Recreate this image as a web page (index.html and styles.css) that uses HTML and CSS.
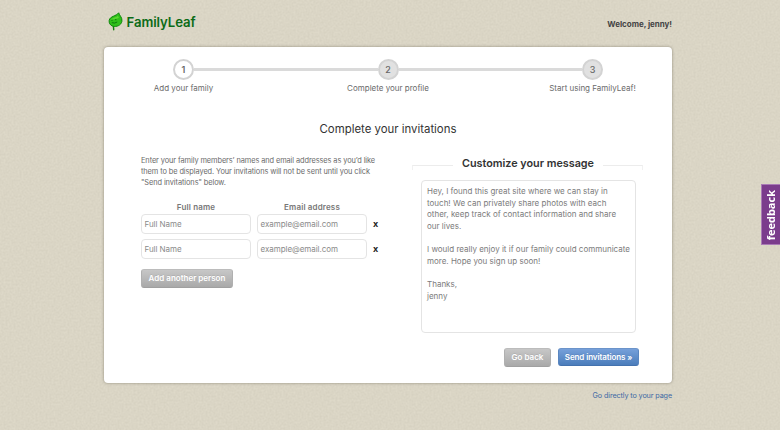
FILE: index.html
```
<!DOCTYPE html>
<html lang="en">
<head>
<meta charset="utf-8">
<title>FamilyLeaf</title>
<link rel="stylesheet" href="styles.css">
</head>
<body>
<svg class="paper" width="780" height="430" aria-hidden="true">
  <filter id="grain" x="0" y="0" width="100%" height="100%" color-interpolation-filters="sRGB">
    <feTurbulence type="fractalNoise" baseFrequency="0.5" numOctaves="2" seed="4"/>
    <feColorMatrix values="0.055 0 0 0 0.828  0.055 0 0 0 0.808  0.055 0 0 0 0.744  0 0 0 0 1"/>
  </filter>
  <rect width="780" height="430" filter="url(#grain)"/>
</svg>
<div class="page">
  <header class="header">
    <div class="logo">
      <svg class="leaf" viewBox="0 0 16 19">
        <path d="M5.4 13.5L5.7 17.8" stroke="#12810c" stroke-width="1.4" stroke-linecap="round"/>
        <path d="M10.7 .8C11.3 3.6 14.6 5.4 13.9 9.3C13.2 13.3 8.6 15.2 4.8 14.2C2.2 13.4 .8 11 1.2 8.3C1.9 4.2 8.3 4.2 10.7 .8Z" fill="#2fc01a" stroke="#0b8609" stroke-width="1"/>
        <path d="M9.8 3.7C8.2 5.6 3.5 5.6 2.5 8.3C4.8 6.8 9.5 7.4 11 5.5Z" fill="#5ad82f"/>
        <path d="M3.4 8.3h1.2M7 7.7h1.4M3.8 10.7Q6.6 11.8 9.2 10" fill="none" stroke="#08700a" stroke-width=".9"/>
      </svg>
      <span class="brand">FamilyLeaf</span>
    </div>
    <div class="welcome">Welcome, jenny!</div>
  </header>
  <main class="card">
    <ol class="steps">
      <li class="step active"><span class="dot">1</span><span class="label">Add your family</span></li>
      <li class="bar"></li>
      <li class="step"><span class="dot">2</span><span class="label">Complete your profile</span></li>
      <li class="bar"></li>
      <li class="step"><span class="dot">3</span><span class="label">Start using FamilyLeaf!</span></li>
    </ol>
    <h1 class="title">Complete your invitations</h1>
    <div class="columns">
      <section class="people">
        <p class="intro">Enter your family members’ names and email addresses as you’d like<br>them to be displayed. Your invitations will not be sent until you click<br>"Send invitations" below.</p>
        <div class="grid">
          <div class="th">Full name</div><div class="th">Email address</div><div></div>
          <div class="field">Full Name</div><div class="field">example@email.com</div><div class="remove">x</div>
          <div class="field">Full Name</div><div class="field">example@email.com</div><div class="remove">x</div>
        </div>
        <button class="btn gray add">Add another person</button>
      </section>
      <section class="message">
        <h2 class="legend"><span class="rule left"></span><span class="legend-text">Customize your message</span><span class="rule right"></span></h2>
        <div class="text">Hey, I found this great site where we can stay in<br>touch! We can privately share photos with each<br>other, keep track of contact information and share<br>our lives.<br><br>I would really enjoy it if our family could communicate<br>more. Hope you sign up soon!<br><br>Thanks,<br>jenny</div>
        <div class="actions">
          <button class="btn gray back">Go back</button>
          <button class="btn blue send">Send invitations »</button>
        </div>
      </section>
    </div>
  </main>
  <a class="skip">Go directly to your page</a>
</div>
<div class="feedback"><span>feedback</span></div>
</body>
</html>
```
FILE: styles.css
```
* { box-sizing: border-box; }
body {
  margin: 0;
  width: 780px;
  height: 430px;
  overflow: hidden;
  background: #d9d5c4;
  font-family: Inter, "Liberation Sans", sans-serif;
  font-size: 8px;
  color: #6a6a6a;
}
.paper { position: absolute; left: 0; top: 0; }
.page { position: relative; width: 568px; margin-left: 104px; }
.header { height: 47px; display: flex; justify-content: space-between; }
.logo { display: flex; padding: 12px 0 0 4px; }
.leaf { width: 16px; height: 19px; fill: none; }
.brand { margin-left: 2.5px; font: 600 13.2px/20px Inter, sans-serif; color: #0b6b17; letter-spacing: -.07px; white-space: nowrap; }
.welcome { padding-top: 19px; font-weight: 700; line-height: 11px; color: #444; letter-spacing: -.03px; }
.card {
  height: 336px;
  background: #fff;
  border-radius: 4px;
  box-shadow: 0 0 3px rgba(80, 75, 60, .55);
}
.steps {
  list-style: none;
  margin: 0;
  padding: 12px 69px 0 69px;
  height: 69px;
  display: flex;
}
.step { width: 21px; display: flex; flex-direction: column; align-items: center; flex: none; }
.dot {
  width: 21px;
  height: 21px;
  border: 2px solid #d3d3d3;
  border-radius: 50%;
  background: #e1e1e1;
  font-size: 9px;
  font-weight: 500;
  line-height: 17px;
  text-align: center;
  color: #666;
}
.active .dot { background: #fff; font-weight: 600; }
.label { margin-top: 2px; line-height: 13px; white-space: nowrap; }
.bar { flex: 1; height: 3px; margin-top: 9px; background: #dadada; }
.title { margin: 0; height: 38px; padding-top: 5px; text-align: center; font-size: 11.4px; line-height: 16px; font-weight: 400; color: #333; }
.columns { display: flex; padding-left: 37px; }
.people { width: 271px; padding-top: 1px; }
.intro { margin: 0; height: 45px; font-size: 7.4px; letter-spacing: -.09px; line-height: 11px; white-space: nowrap; }
.grid {
  display: grid;
  grid-template-columns: 110px 110px 12px;
  grid-template-rows: 9px 20px 20px;
  column-gap: 6px;
  row-gap: 5px;
  height: 69px;
}
.th { text-align: center; font-weight: 600; line-height: 14px; color: #777; letter-spacing: .15px; }
.field { border: 1px solid #e4e4e4; border-radius: 4px; padding-left: 2.5px; line-height: 19px; color: #8a8a8a; letter-spacing: -.05px; }
.remove { font-size: 9px; font-weight: 700; line-height: 19px; color: #222; }
.btn {
  border: 1px solid;
  border-radius: 3px;
  padding: 0;
  font: 600 8px/17px Inter, sans-serif;
  color: #fff;
  white-space: nowrap;
  text-shadow: 0 -1px 0 rgba(0, 0, 0, .08);
}
.gray { height: 19px; background: linear-gradient(#c7c7c7, #a9a9a9); border-color: #bcbcbc #b0b0b0 #a0a0a0; }
.blue { height: 18px; background: linear-gradient(#76a0da, #4b7dbb); border-color: #6c94ca #5a86c0 #4472ae; line-height: 16px; letter-spacing: -.1px; }
.add { width: 92px; display: block; }
.message { width: 231px; }
.legend { margin: 0; height: 26px; display: flex; align-items: flex-start; font-size: 10.8px; line-height: 19px; font-weight: 600; color: #333; white-space: nowrap; }
.rule { height: 5px; margin-top: 11px; border-top: 1px solid #ececec; flex: none; width: 41px; }
.left { border-left: 1px solid #f1f1f1; }
.right { border-right: 1px solid #f1f1f1; width: 40px; }
.legend-text { flex: 1; display: flex; justify-content: center; }
.text { width: 215px; height: 153px; margin-left: 9px; padding: 5px 0 0 5px; border: 1px solid #e4e4e4; border-radius: 4px; line-height: 11.65px; color: #7b7b7b; white-space: nowrap; }
.actions { display: flex; gap: 7px; padding: 15px 4px 0 0; justify-content: flex-end; }
.back { width: 47px; }
.send { width: 81px; }
.skip { display: block; padding-top: 7px; text-align: right; font-size: 7.2px; letter-spacing: -.1px; line-height: 11px; color: #4068a4; }
.feedback {
  position: absolute;
  left: 761px;
  top: 184px;
  width: 20px;
  height: 61px;
  display: flex;
  align-items: center;
  justify-content: center;
  background: #7b3c8c;
  border: 1px solid #a97ab5;
}
.feedback span { writing-mode: vertical-rl; transform: rotate(180deg); font: 700 11px/18px "Open Sans", sans-serif; color: #fff; padding-bottom: 1px; }
```
